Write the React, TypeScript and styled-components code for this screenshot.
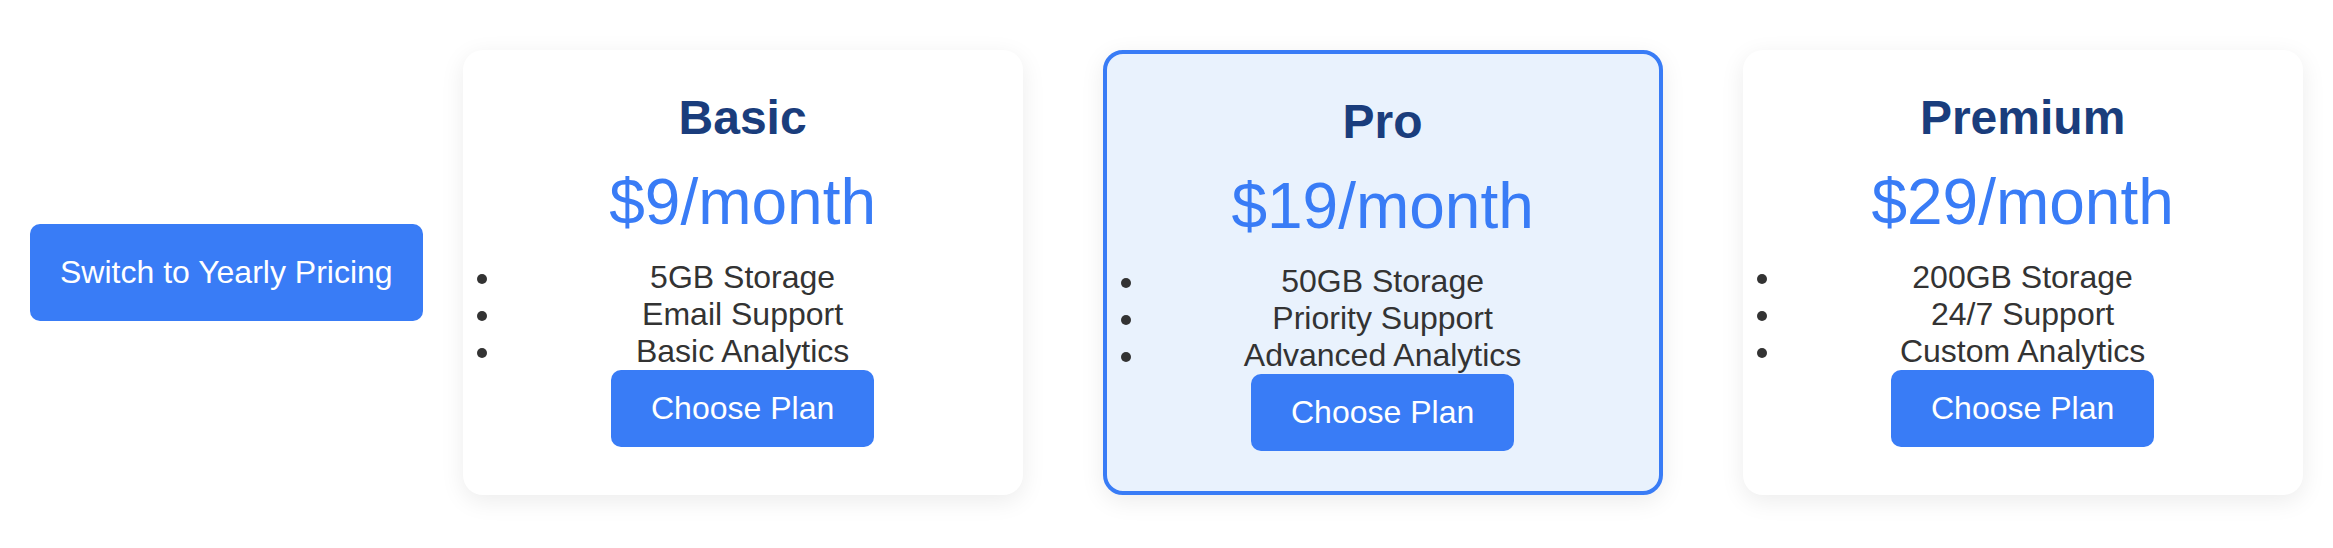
import React from "react";
import styled, { createGlobalStyle } from "styled-components";

const GlobalStyle = createGlobalStyle`
  * {
    box-sizing: border-box;
  }

  body {
    margin: 0;
    background: #ffffff;
    font-family: "Liberation Sans", Arial, Helvetica, sans-serif;
  }
`;

type Plan = {
  name: string;
  price: string;
  features: string[];
  featured?: boolean;
};

const plans: Plan[] = [
  {
    name: "Basic",
    price: "$9/month",
    features: ["5GB Storage", "Email Support", "Basic Analytics"],
  },
  {
    name: "Pro",
    price: "$19/month",
    features: ["50GB Storage", "Priority Support", "Advanced Analytics"],
    featured: true,
  },
  {
    name: "Premium",
    price: "$29/month",
    features: ["200GB Storage", "24/7 Support", "Custom Analytics"],
  },
];

const App = () => {
  return (
    <>
      <GlobalStyle />
      <Page>
        <ToggleButton>Switch to Yearly Pricing</ToggleButton>
        <CardRow>
          {plans.map((plan) => (
            <Card key={plan.name} $featured={plan.featured}>
              <PlanName>{plan.name}</PlanName>
              <Price>{plan.price}</Price>
              <FeatureList>
                {plan.features.map((feature) => (
                  <Feature key={feature}>{feature}</Feature>
                ))}
              </FeatureList>
              <ChooseButton>Choose Plan</ChooseButton>
            </Card>
          ))}
        </CardRow>
      </Page>
    </>
  );
};

export default App;

const Page = styled.div`
  display: flex;
  align-items: center;
  gap: 40px;
  padding: 50px 30px;
`;

const ToggleButton = styled.button`
  padding: 30px 30px;
  border: none;
  border-radius: 10px;
  background-color: #397cf6;
  color: #ffffff;
  font-family: "Liberation Sans", Arial, sans-serif;
  font-size: 32px;
  line-height: normal;
  cursor: pointer;
`;

const CardRow = styled.div`
  display: flex;
  align-items: stretch;
  gap: 80px;
`;

const Card = styled.div<{ $featured?: boolean }>`
  display: flex;
  flex-direction: column;
  align-items: center;
  width: 560px;
  padding: 40px;
  border-radius: 20px;
  text-align: center;
  background-color: ${(p) => (p.$featured ? "#e9f2fd" : "#ffffff")};
  border: ${(p) => (p.$featured ? "4px solid #397cf6" : "none")};
  box-shadow: 0 6px 24px rgba(0, 0, 0, 0.08);
`;

const PlanName = styled.h2`
  margin: 0 0 20px;
  font-size: 48px;
  font-weight: 700;
  line-height: normal;
  color: #1a3d7c;
`;

const Price = styled.p`
  margin: 0 0 20px;
  font-size: 64px;
  line-height: normal;
  color: #397cf6;
`;

const FeatureList = styled.ul`
  align-self: stretch;
  margin: 0;
  padding: 0;
  list-style: disc outside;
`;

const Feature = styled.li`
  font-size: 32px;
  line-height: normal;
  color: #333333;
`;

const ChooseButton = styled.button`
  padding: 20px 40px;
  border: none;
  border-radius: 10px;
  background-color: #397cf6;
  color: #ffffff;
  font-family: "Liberation Sans", Arial, sans-serif;
  font-size: 32px;
  line-height: normal;
  cursor: pointer;
`;
